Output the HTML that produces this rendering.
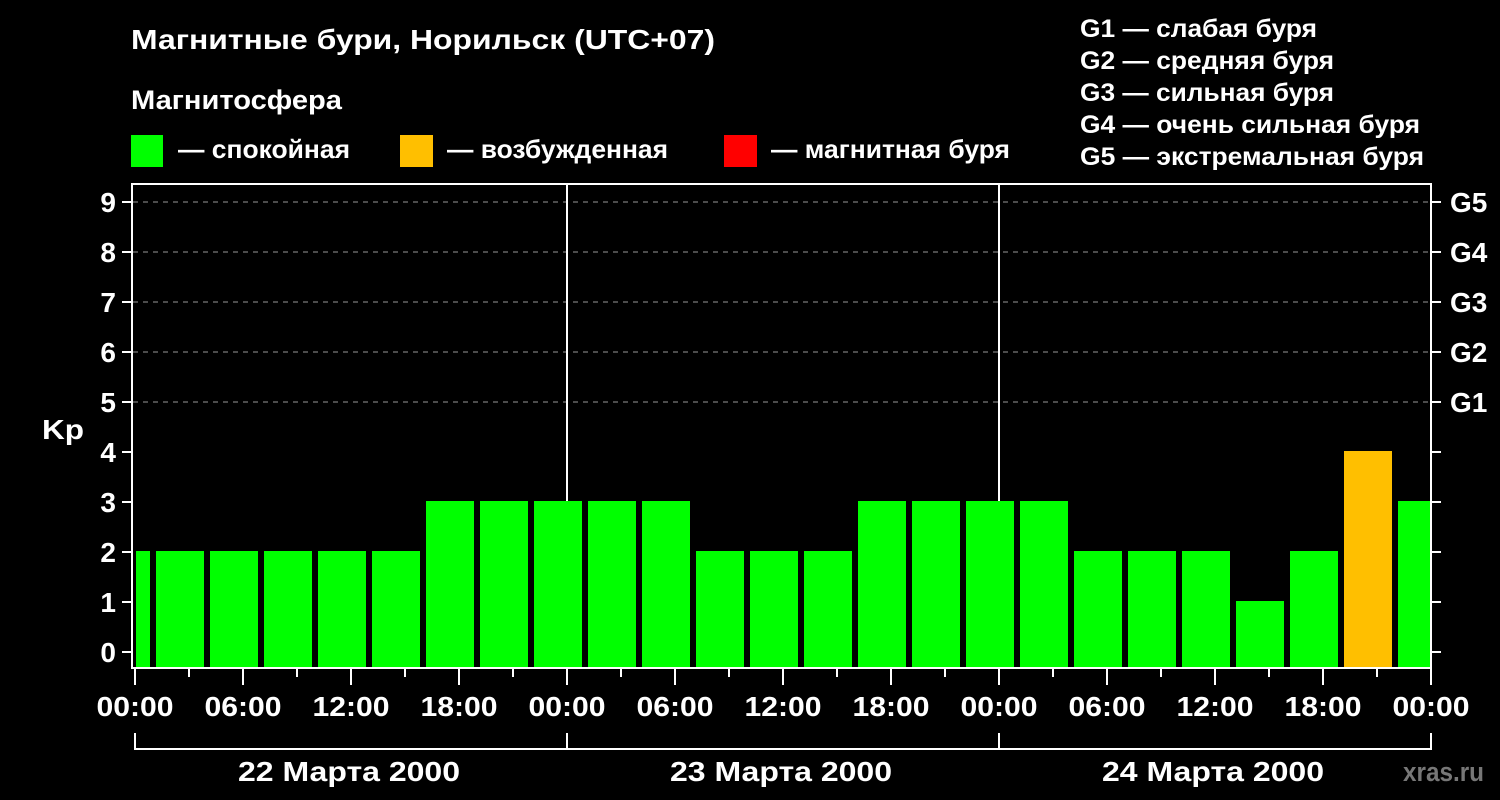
<!DOCTYPE html>
<html><head><meta charset="utf-8"><style>
html,body{margin:0;padding:0;background:#000;}
svg{display:block;font-family:"Liberation Sans",Arial,sans-serif;font-weight:bold;}
</style></head><body>
<svg width="1500" height="800" viewBox="0 0 1500 800" xmlns="http://www.w3.org/2000/svg">
<rect width="1500" height="800" fill="#000"/>
<g lengthAdjust="spacingAndGlyphs">
<text x="131" y="49" font-size="28" fill="#fff" textLength="584" lengthAdjust="spacingAndGlyphs">Магнитные бури, Норильск (UTC+07)</text>
<text x="131" y="109" font-size="27" fill="#fff" textLength="211" lengthAdjust="spacingAndGlyphs">Магнитосфера</text>
</g>
<rect x="131" y="135" width="32" height="32" fill="#00ff00"/>
<text x="178" y="158" font-size="26" fill="#fff" textLength="172" lengthAdjust="spacingAndGlyphs">— спокойная</text>
<rect x="400" y="135" width="33" height="32" fill="#ffbf00"/>
<text x="447" y="158" font-size="26" fill="#fff" textLength="221" lengthAdjust="spacingAndGlyphs">— возбужденная</text>
<rect x="724" y="135" width="33" height="32" fill="#ff0000"/>
<text x="771" y="158" font-size="26" fill="#fff" textLength="239" lengthAdjust="spacingAndGlyphs">— магнитная буря</text>
<g font-size="25" fill="#fff">
<text x="1080" y="37" textLength="237" lengthAdjust="spacingAndGlyphs">G1 — слабая буря</text>
<text x="1080" y="69" textLength="254" lengthAdjust="spacingAndGlyphs">G2 — средняя буря</text>
<text x="1080" y="101" textLength="254" lengthAdjust="spacingAndGlyphs">G3 — сильная буря</text>
<text x="1080" y="133" textLength="340" lengthAdjust="spacingAndGlyphs">G4 — очень сильная буря</text>
<text x="1080" y="165" textLength="344" lengthAdjust="spacingAndGlyphs">G5 — экстремальная буря</text>
</g>
<g stroke="#999" stroke-width="1" stroke-dasharray="5,5">
<line x1="133" y1="202" x2="1431" y2="202"/><line x1="133" y1="252" x2="1431" y2="252"/>
<line x1="133" y1="302" x2="1431" y2="302"/><line x1="133" y1="352" x2="1431" y2="352"/>
<line x1="133" y1="402" x2="1431" y2="402"/>
</g>
<line x1="567" y1="183" x2="567" y2="668" stroke="#fff" stroke-width="2"/>
<line x1="999" y1="183" x2="999" y2="668" stroke="#fff" stroke-width="2"/>
<g fill="#00ff00">
<rect x="136" y="551" width="14" height="117"/>
<rect x="156" y="551" width="48" height="117"/>
<rect x="210" y="551" width="48" height="117"/>
<rect x="264" y="551" width="48" height="117"/>
<rect x="318" y="551" width="48" height="117"/>
<rect x="372" y="551" width="48" height="117"/>
<rect x="426" y="501" width="48" height="167"/>
<rect x="480" y="501" width="48" height="167"/>
<rect x="534" y="501" width="48" height="167"/>
<rect x="588" y="501" width="48" height="167"/>
<rect x="642" y="501" width="48" height="167"/>
<rect x="696" y="551" width="48" height="117"/>
<rect x="750" y="551" width="48" height="117"/>
<rect x="804" y="551" width="48" height="117"/>
<rect x="858" y="501" width="48" height="167"/>
<rect x="912" y="501" width="48" height="167"/>
<rect x="966" y="501" width="48" height="167"/>
<rect x="1020" y="501" width="48" height="167"/>
<rect x="1074" y="551" width="48" height="117"/>
<rect x="1128" y="551" width="48" height="117"/>
<rect x="1182" y="551" width="48" height="117"/>
<rect x="1236" y="601" width="48" height="67"/>
<rect x="1290" y="551" width="48" height="117"/>
<rect x="1398" y="501" width="32" height="167"/>
</g>
<rect x="1344" y="451" width="48" height="217" fill="#ffbf00"/>
<rect x="132" y="184" width="1299" height="484" fill="none" stroke="#fff" stroke-width="2"/>
<g stroke="#fff" stroke-width="2">
<line x1="122" y1="202" x2="132" y2="202"/><line x1="122" y1="252" x2="132" y2="252"/>
<line x1="122" y1="302" x2="132" y2="302"/><line x1="122" y1="352" x2="132" y2="352"/>
<line x1="122" y1="402" x2="132" y2="402"/><line x1="122" y1="452" x2="132" y2="452"/>
<line x1="122" y1="502" x2="132" y2="502"/><line x1="122" y1="552" x2="132" y2="552"/>
<line x1="122" y1="602" x2="132" y2="602"/><line x1="122" y1="652" x2="132" y2="652"/>
<line x1="1431" y1="202" x2="1441" y2="202"/><line x1="1431" y1="252" x2="1441" y2="252"/>
<line x1="1431" y1="302" x2="1441" y2="302"/><line x1="1431" y1="352" x2="1441" y2="352"/>
<line x1="1431" y1="402" x2="1441" y2="402"/><line x1="1431" y1="452" x2="1441" y2="452"/>
<line x1="1431" y1="502" x2="1441" y2="502"/><line x1="1431" y1="552" x2="1441" y2="552"/>
<line x1="1431" y1="602" x2="1441" y2="602"/><line x1="1431" y1="652" x2="1441" y2="652"/>
<line x1="135" y1="668" x2="135" y2="685"/><line x1="243" y1="668" x2="243" y2="685"/>
<line x1="351" y1="668" x2="351" y2="685"/><line x1="459" y1="668" x2="459" y2="685"/>
<line x1="567" y1="668" x2="567" y2="685"/><line x1="675" y1="668" x2="675" y2="685"/>
<line x1="783" y1="668" x2="783" y2="685"/><line x1="891" y1="668" x2="891" y2="685"/>
<line x1="999" y1="668" x2="999" y2="685"/><line x1="1107" y1="668" x2="1107" y2="685"/>
<line x1="1215" y1="668" x2="1215" y2="685"/><line x1="1323" y1="668" x2="1323" y2="685"/>
<line x1="1431" y1="668" x2="1431" y2="685"/>
<line x1="189" y1="668" x2="189" y2="677"/><line x1="297" y1="668" x2="297" y2="677"/>
<line x1="405" y1="668" x2="405" y2="677"/><line x1="513" y1="668" x2="513" y2="677"/>
<line x1="621" y1="668" x2="621" y2="677"/><line x1="729" y1="668" x2="729" y2="677"/>
<line x1="837" y1="668" x2="837" y2="677"/><line x1="945" y1="668" x2="945" y2="677"/>
<line x1="1053" y1="668" x2="1053" y2="677"/><line x1="1161" y1="668" x2="1161" y2="677"/>
<line x1="1269" y1="668" x2="1269" y2="677"/><line x1="1377" y1="668" x2="1377" y2="677"/>
<polyline points="135,733 135,749 1431,749 1431,733" fill="none"/>
<line x1="567" y1="733" x2="567" y2="749"/><line x1="999" y1="733" x2="999" y2="749"/>
</g>
<g font-size="28" fill="#fff" text-anchor="end">
<text x="116" y="212">9</text><text x="116" y="262">8</text><text x="116" y="312">7</text>
<text x="116" y="362">6</text><text x="116" y="412">5</text><text x="116" y="462">4</text>
<text x="116" y="512">3</text><text x="116" y="562">2</text><text x="116" y="612">1</text>
<text x="116" y="662">0</text>
</g>
<text x="42" y="439" font-size="28" fill="#fff" textLength="42" lengthAdjust="spacingAndGlyphs">Kp</text>
<g font-size="28" fill="#fff">
<text x="1450" y="212">G5</text><text x="1450" y="262">G4</text><text x="1450" y="312">G3</text>
<text x="1450" y="362">G2</text><text x="1450" y="412">G1</text>
</g>
<g font-size="28" fill="#fff" text-anchor="middle">
<text x="135" y="716" textLength="77" lengthAdjust="spacingAndGlyphs">00:00</text><text x="243" y="716" textLength="77" lengthAdjust="spacingAndGlyphs">06:00</text><text x="351" y="716" textLength="77" lengthAdjust="spacingAndGlyphs">12:00</text>
<text x="459" y="716" textLength="77" lengthAdjust="spacingAndGlyphs">18:00</text><text x="567" y="716" textLength="77" lengthAdjust="spacingAndGlyphs">00:00</text><text x="675" y="716" textLength="77" lengthAdjust="spacingAndGlyphs">06:00</text>
<text x="783" y="716" textLength="77" lengthAdjust="spacingAndGlyphs">12:00</text><text x="891" y="716" textLength="77" lengthAdjust="spacingAndGlyphs">18:00</text><text x="999" y="716" textLength="77" lengthAdjust="spacingAndGlyphs">00:00</text>
<text x="1107" y="716" textLength="77" lengthAdjust="spacingAndGlyphs">06:00</text><text x="1215" y="716" textLength="77" lengthAdjust="spacingAndGlyphs">12:00</text><text x="1323" y="716" textLength="77" lengthAdjust="spacingAndGlyphs">18:00</text>
<text x="1431" y="716" textLength="77" lengthAdjust="spacingAndGlyphs">00:00</text>
<text x="349" y="781" textLength="222" lengthAdjust="spacingAndGlyphs">22 Марта 2000</text>
<text x="781" y="781" textLength="222" lengthAdjust="spacingAndGlyphs">23 Марта 2000</text>
<text x="1213" y="781" textLength="222" lengthAdjust="spacingAndGlyphs">24 Марта 2000</text>
</g>
<text x="1403" y="781" font-size="27" fill="#777" textLength="81" lengthAdjust="spacingAndGlyphs">xras.ru</text>
</svg>
</body></html>
